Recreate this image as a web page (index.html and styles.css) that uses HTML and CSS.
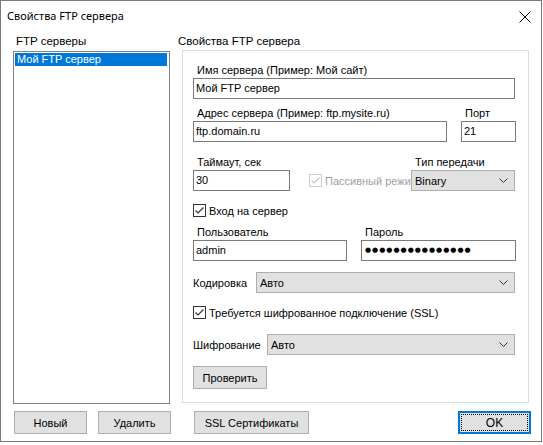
FILE: index.html
```html
<!DOCTYPE html>
<html lang="ru">
<head>
<meta charset="utf-8">
<title>Свойства FTP сервера</title>
<link rel="stylesheet" href="styles.css">
</head>
<body>
<div class="window">
  <div class="titlebar">
    <span class="title">Свойства FTP сервера</span>
    <span class="close"><svg width="12" height="12" viewBox="0 0 12 12"><path d="M0.5 0.5 L11.5 11.5 M11.5 0.5 L0.5 11.5" stroke="#000" stroke-width="1" fill="none"/></svg></span>
  </div>
  <div class="main">
    <div class="col-left">
      <div class="head">FTP серверы</div>
      <div class="listbox">
        <div class="item selected">Мой FTP сервер</div>
      </div>
    </div>
    <div class="col-right">
      <div class="head head-right">Свойства FTP сервера</div>
      <div class="panel">
        <div class="row r1">
          <label class="lbl">Имя сервера (Пример: Мой сайт)</label>
          <div class="field">Мой FTP сервер</div>
        </div>
        <div class="row r2 grid2">
          <div>
            <label class="lbl">Адрес сервера (Пример: ftp.mysite.ru)</label>
            <div class="field">ftp.domain.ru</div>
          </div>
          <div>
            <label class="lbl">Порт</label>
            <div class="field">21</div>
          </div>
        </div>
        <div class="row r3 grid3">
          <div>
            <label class="lbl">Таймаут, сек</label>
            <div class="field">30</div>
          </div>
          <div class="passive">
            <span class="chk disabled"><svg width="11" height="11" viewBox="0 0 11 11"><path d="M1.5 5.5 L4 8 L9.5 2.5" stroke="#c8c8c8" stroke-width="1.2" fill="none"/></svg></span>
            <span class="chk-text disabled-text">Пассивный режи</span>
          </div>
          <div>
            <label class="lbl">Тип передачи</label>
            <div class="combo"><span>Binary</span><svg class="chev" width="9" height="5" viewBox="0 0 9 5"><path d="M0.5 0.5 L4.5 4.5 L8.5 0.5" stroke="#333" stroke-width="1" fill="none"/></svg></div>
          </div>
        </div>
        <div class="row r4 checkrow">
          <span class="chk"><svg width="11" height="11" viewBox="0 0 11 11"><path d="M1.5 5.5 L4 8 L9.5 2.5" stroke="#333" stroke-width="1.2" fill="none"/></svg></span>
          <span class="chk-text">Вход на сервер</span>
        </div>
        <div class="row r5 grid2b">
          <div>
            <label class="lbl">Пользователь</label>
            <div class="field">admin</div>
          </div>
          <div>
            <label class="lbl">Пароль</label>
            <div class="field pwd">●●●●●●●●●●●●●●●</div>
          </div>
        </div>
        <div class="row r6 inline">
          <span class="ilbl">Кодировка</span>
          <div class="combo grow"><span>Авто</span><svg class="chev" width="9" height="5" viewBox="0 0 9 5"><path d="M0.5 0.5 L4.5 4.5 L8.5 0.5" stroke="#333" stroke-width="1" fill="none"/></svg></div>
        </div>
        <div class="row r7 checkrow">
          <span class="chk"><svg width="11" height="11" viewBox="0 0 11 11"><path d="M1.5 5.5 L4 8 L9.5 2.5" stroke="#333" stroke-width="1.2" fill="none"/></svg></span>
          <span class="chk-text">Требуется шифрованное подключение (SSL)</span>
        </div>
        <div class="row r8 inline">
          <span class="ilbl">Шифрование</span>
          <div class="combo grow"><span>Авто</span><svg class="chev" width="9" height="5" viewBox="0 0 9 5"><path d="M0.5 0.5 L4.5 4.5 L8.5 0.5" stroke="#333" stroke-width="1" fill="none"/></svg></div>
        </div>
        <div class="row r9">
          <button class="btn btn-check">Проверить</button>
        </div>
      </div>
    </div>
  </div>
  <div class="bottom">
    <button class="btn btn-new">Новый</button>
    <button class="btn btn-del">Удалить</button>
    <button class="btn btn-ssl">SSL Сертификаты</button>
    <button class="btn btn-ok"><span class="focus">OK</span></button>
  </div>
</div>
</body>
</html>
```
FILE: styles.css
```css
html, body {
  margin: 0;
  padding: 0;
  background: #ffffff;
}
body {
  font-family: "Liberation Sans", Arial, sans-serif;
  font-size: 11px;
  color: #000;
}
.window {
  width: 542px;
  height: 442px;
  box-sizing: border-box;
  border: 1px solid #7a7a7a;
  background: #fff;
  display: flex;
  flex-direction: column;
}
.titlebar {
  height: 29px;
  display: flex;
  align-items: center;
  justify-content: space-between;
  padding-left: 6px;
  padding-right: 10px;
}
.title {
  font-family: "Noto Sans", "Open Sans", sans-serif;
  font-size: 11px;
}
.close {
  display: flex;
  padding-top: 2px;
}
.main {
  display: grid;
  grid-template-columns: 157px 347px;
  column-gap: 12px;
  padding: 4px 11px 0 12px;
}
.col-left, .col-right {
  display: flex;
  flex-direction: column;
}
.head {
  height: 15px;
  line-height: 15px;
  font-size: 11.5px;
  padding-left: 3px;
}
.head-right {
  margin-left: -7px;
}
.listbox {
  margin-top: 2px;
  height: 353px;
  box-sizing: border-box;
  border: 1px solid #828282;
  padding: 1px;
}
.item {
  height: 13px;
  line-height: 13px;
  padding-left: 2px;
}
.item.selected {
  background: #0078d7;
  color: #fff;
  margin-right: 1px;
}
.panel {
  margin-top: 1px;
  height: 353px;
  box-sizing: border-box;
  border: 1px solid #dcdcdc;
  padding: 13px 13px 0 10px;
  display: flex;
  flex-direction: column;
}
.lbl {
  display: block;
  height: 13px;
  line-height: 13px;
  margin-left: 4px;
  margin-bottom: 1px;
  white-space: nowrap;
}
.field {
  height: 21px;
  box-sizing: border-box;
  border: 1px solid #7a7a7a;
  padding: 0 2px;
  line-height: 19px;
  white-space: nowrap;
  overflow: hidden;
}
.pwd {
  font-family: "DejaVu Sans", sans-serif;
  font-size: 7px;
  letter-spacing: 1px;
  padding-left: 3px;
}
.combo {
  height: 21px;
  box-sizing: border-box;
  border: 1px solid #adadad;
  background: #e1e1e1;
  display: flex;
  align-items: center;
  justify-content: space-between;
  padding: 0 6px 0 3px;
}
.grow {
  flex: 1;
}
.r2 { margin-top: 8px; }
.r3 { margin-top: 14px; }
.r4 { margin-top: 13px; }
.r5 { margin-top: 9px; }
.r6 { margin-top: 11px; }
.r7 { margin-top: 13px; }
.r8 { margin-top: 15px; }
.r9 { margin-top: 11px; }
.grid2 {
  display: grid;
  grid-template-columns: 254px 55px;
  column-gap: 14px;
}
.grid2b {
  display: grid;
  grid-template-columns: 154px 155px;
  column-gap: 14px;
}
.grid3 {
  display: grid;
  grid-template-columns: 97px 1fr 104px;
}
.passive {
  display: flex;
  align-items: center;
  align-self: end;
  height: 21px;
  padding-left: 19px;
  overflow: hidden;
  white-space: nowrap;
}
.checkrow {
  display: flex;
  align-items: center;
  height: 13px;
}
.chk {
  width: 13px;
  height: 13px;
  box-sizing: border-box;
  border: 1px solid #333;
  background: #fff;
  display: flex;
  align-items: center;
  justify-content: center;
  flex: none;
}
.chk.disabled {
  border-color: #cccccc;
}
.chk-text {
  margin-left: 3px;
  font-size: 11px;
}
.disabled-text {
  color: #a0a0a0;
}
.inline {
  display: flex;
  align-items: center;
}
.r6 .ilbl { width: 63px; }
.r8 .ilbl { width: 74px; }
.btn {
  font-family: "Liberation Sans", Arial, sans-serif;
  font-size: 11px;
  color: #000;
  height: 23px;
  box-sizing: border-box;
  border: 1px solid #adadad;
  background: #e1e1e1;
  padding: 0;
  margin: 0;
}
.btn-check { width: 74px; }
.bottom {
  display: flex;
  padding: 7px 0 0 13px;
}
.btn-new { width: 73px; }
.btn-del { width: 73px; margin-left: 11px; }
.btn-ssl { width: 115px; margin-left: 23px; }
.btn-ok {
  width: 73px;
  margin-left: 149px;
  border: 2px solid #0078d7;
  padding: 1px;
  display: flex;
}
.focus {
  flex: 1;
  border: 1px dotted #000;
  display: flex;
  align-items: center;
  justify-content: center;
  font-size: 12px;
}
```
